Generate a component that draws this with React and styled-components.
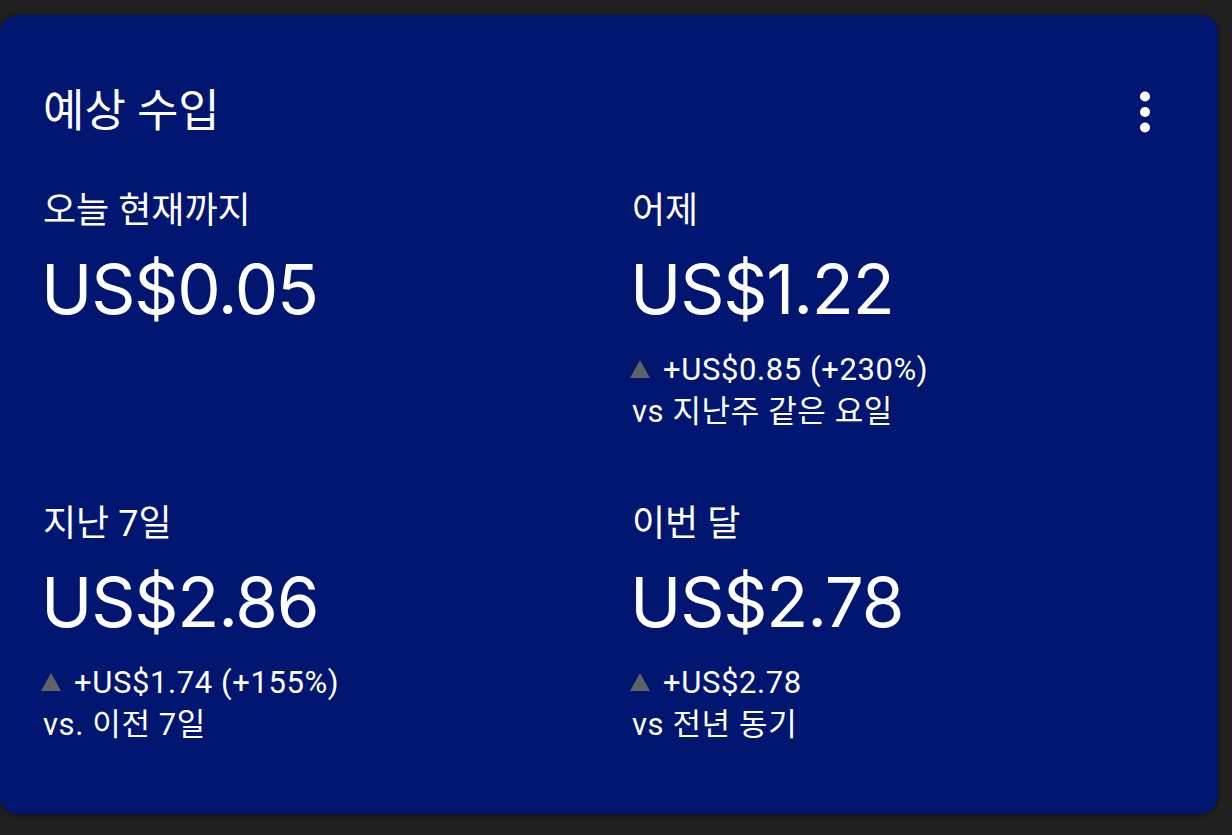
import React from "react";
import styled, { createGlobalStyle } from "styled-components";

const GlobalStyle = createGlobalStyle`
	html, body {
		margin: 0;
		padding: 0;
		background: #202020;
	}
	body {
		font-family: Roboto, "Noto Sans CJK KR", sans-serif;
		color: #fff;
	}
`;

const metrics = [
	{ id: 1, label: "오늘 현재까지", value: "US$0.05" },
	{
		id: 2,
		label: "어제",
		value: "US$1.22",
		change: "+US$0.85 (+230%)",
		compare: "vs 지난주 같은 요일",
	},
	{
		id: 3,
		label: "지난 7일",
		value: "US$2.86",
		change: "+US$1.74 (+155%)",
		compare: "vs. 이전 7일",
	},
	{
		id: 4,
		label: "이번 달",
		value: "US$2.78",
		change: "+US$2.78",
		compare: "vs 전년 동기",
	},
];

function MoreIcon() {
	return (
		<svg width="12" height="44" viewBox="0 0 12 44">
			<circle cx="6" cy="6.5" r="5" fill="#fff" />
			<circle cx="6" cy="22" r="5" fill="#fff" />
			<circle cx="6" cy="37.5" r="5" fill="#fff" />
		</svg>
	);
}

function App() {
	return (
		<Page>
			<GlobalStyle />
			<Card>
				<Header>
					<Title>예상 수입</Title>
					<MoreButton aria-label="더보기">
						<MoreIcon />
					</MoreButton>
				</Header>
				<Grid>
					{metrics.map((m) => (
						<Metric key={m.id}>
							<Label>{m.label}</Label>
							<Value>{m.value}</Value>
							{m.change && (
								<Sub>
									<ChangeLine>
										<Arrow />
										{m.change}
									</ChangeLine>
									<SubLine>{m.compare}</SubLine>
								</Sub>
							)}
						</Metric>
					))}
				</Grid>
			</Card>
		</Page>
	);
}

export default App;

const Page = styled.div`
	width: 1232px;
	height: 835px;
	padding-top: 15px;
	box-sizing: border-box;
	overflow: hidden;
`;

const Card = styled.div`
	width: 1218px;
	height: 799px;
	box-sizing: border-box;
	background: #001670;
	border-radius: 18px;
	padding: 72px 0 0 43px;
	box-shadow: 0 1px 4px rgba(0, 0, 0, 0.5);
`;

const Header = styled.div`
	display: flex;
	align-items: center;
	justify-content: space-between;
	height: 50px;
	margin-right: 49px;
`;

const Title = styled.h1`
	margin: 0;
	font-size: 45px;
	font-weight: 400;
	line-height: 50px;
	letter-spacing: 0;
`;

const MoreButton = styled.button`
	width: 48px;
	height: 48px;
	border: none;
	background: transparent;
	padding: 0;
	display: flex;
	align-items: center;
	justify-content: center;
	cursor: pointer;
`;

const Grid = styled.div`
	display: grid;
	grid-template-columns: 589px 1fr;
	row-gap: 71px;
	margin-top: 54px;
`;

const Metric = styled.div`
	display: flex;
	flex-direction: column;
	align-items: flex-start;
`;

const Label = styled.div`
	font-size: 36px;
	line-height: 40px;
	margin-bottom: 18px;
`;

const Value = styled.div`
	font-family: Inter, Roboto, sans-serif;
	font-size: 69px;
	line-height: 80px;
	font-weight: 400;
	letter-spacing: -1.2px;
	margin-left: -2px;
`;

const Sub = styled.div`
	margin-top: 20px;
	font-size: 31px;
	line-height: 42px;
	letter-spacing: 0.6px;
`;

const ChangeLine = styled.div`
	display: flex;
	align-items: center;
`;

const SubLine = styled.div``;

const Arrow = styled.span`
	width: 0;
	height: 0;
	border-left: 10px solid transparent;
	border-right: 10px solid transparent;
	border-bottom: 18px solid #5f6368;
	margin-left: -2px;
	margin-right: 13px;
	margin-top: -2px;
`;
